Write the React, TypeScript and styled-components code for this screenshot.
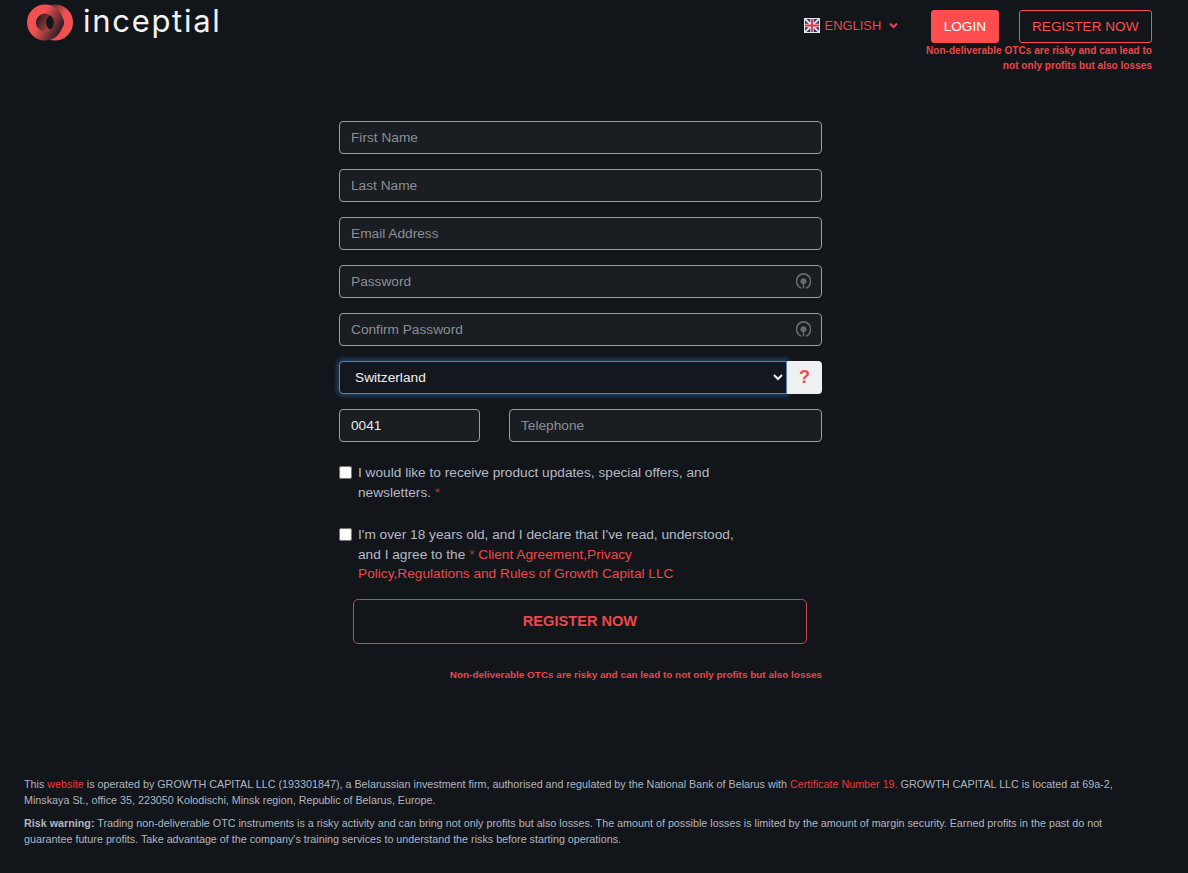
import styled, { createGlobalStyle } from 'styled-components';

const GlobalStyle = createGlobalStyle`
  html, body {
    margin: 0;
    background: #12151a;
  }
  * { box-sizing: border-box; }
  body {
    font-family: "Liberation Sans", Arial, sans-serif;
    color: #b4bac6;
  }
`;

const Page = styled.div`
  width: 1188px;
  height: 873px;
  overflow: hidden;
  display: flex;
  flex-direction: column;
`;

const Header = styled.header`
  display: flex;
  justify-content: space-between;
  align-items: flex-start;
  padding: 0 36px 0 27px;
  height: 120.6px;
`;

const Brand = styled.div`
  display: flex;
  align-items: center;
  gap: 10px;
  height: 44px;
`;

const Wordmark = styled.span`
  font-family: "Inter", sans-serif;
  font-weight: 400;
  font-size: 31px;
  letter-spacing: 1.7px;
  color: #f2f2f2;
  line-height: 40px;
  margin-top: -3px;
`;

const HeaderRight = styled.div`
  display: flex;
  flex-direction: column;
  align-items: flex-end;
  padding-top: 10px;
`;

const NavRow = styled.div`
  display: flex;
  align-items: center;
`;

const Lang = styled.div`
  display: flex;
  align-items: center;
  font-size: 12.9px;
  color: #e8484b;
  margin-right: 33px;
  margin-top: -3px;
`;

const LangLabel = styled.span`
  margin: 0 8px 0 5px;
`;

const NavButton = styled.button<{ $filled?: boolean }>`
  height: 33px;
  font-family: inherit;
  font-size: 13.6px;
  border-radius: 3px;
  border: 1px solid #ff4d4f;
  padding: 0 ${({ $filled }) => ($filled ? '11.5px' : '12.5px')};
  background: ${({ $filled }) => ($filled ? '#ff4d4f' : 'transparent')};
  color: ${({ $filled }) => ($filled ? '#ffffff' : '#ff4d4f')};
  margin-left: ${({ $filled }) => ($filled ? '0' : '20px')};
`;

const Warning = styled.div<{ $size: number }>`
  font-size: ${({ $size }) => $size}px;
  font-weight: 700;
  line-height: 15px;
  color: #e8474a;
  text-align: right;
`;

const Form = styled.form`
  width: 483px;
  margin-left: 339px;
  display: flex;
  flex-direction: column;
  gap: 15px;
`;

const Field = styled.div`
  position: relative;
  flex: 1;
`;

const Input = styled.input<{ $strong?: boolean }>`
  display: block;
  width: 100%;
  height: 33px;
  padding: 0 11px;
  background: #1a1d22;
  border: 1px solid #9a9da1;
  border-radius: 4px;
  font-family: inherit;
  font-size: 13.7px;
  font-weight: ${({ $strong }) => ($strong ? 500 : 400)};
  color: #e6e8ec;
  outline: none;

  &::placeholder {
    color: #8b8f95;
    opacity: 1;
  }
`;

const EyeIcon = styled.svg`
  position: absolute;
  right: 11px;
  top: 8px;
  width: 15px;
  height: 17px;
`;

const SelectRow = styled.div`
  display: flex;
  height: 33px;
`;

const Select = styled.select`
  flex: 1;
  height: 33px;
  padding: 0 11px;
  background: #14181e;
  border: 1px solid #5d86ae;
  border-radius: 4px 0 0 4px;
  box-shadow: 0 0 5px 2px rgba(60, 130, 200, 0.45);
  font-family: inherit;
  font-size: 13.7px;
  color: #f0f0f0;
  color-scheme: dark;
  outline: none;
`;

const HelpBox = styled.div`
  width: 35px;
  display: flex;
  align-items: center;
  justify-content: center;
  background: #eff0f2;
  border-radius: 0 4px 4px 0;
  color: #ee4b50;
  font-size: 18px;
  font-weight: 700;
`;

const PhoneRow = styled.div`
  display: flex;
  gap: 29px;
`;

const CodeField = styled.div`
  width: 141px;
`;

const Consents = styled.div`
  display: flex;
  flex-direction: column;
  gap: 23px;
  margin-top: 6.5px;
`;

const Consent = styled.label`
  display: flex;
  align-items: flex-start;
  font-size: 13.7px;
  line-height: 19.5px;
  color: #b4bac6;
  width: 400px;
`;

const Check = styled.input`
  width: 13px;
  height: 13px;
  margin: 3px 6px 0 0;
  flex: none;
  accent-color: #ffffff;
`;

const Red = styled.span`
  color: #ee474b;
`;

const Star = styled.span`
  color: #a83c42;
`;

const SubmitButton = styled.button`
  align-self: flex-start;
  margin: 0 0 0 14px;
  width: 454px;
  height: 45.5px;
  background: transparent;
  border: 1px solid #c9474b;
  border-radius: 5px;
  color: #ee474b;
  font-family: inherit;
  font-size: 14.6px;
  font-weight: 700;
`;

const FormWarning = styled(Warning)`
  margin-top: 8px;
`;

const Footer = styled.footer`
  margin-top: auto;
  padding: 0 50px 26px 24px;
  font-size: 10.75px;
  line-height: 15.5px;
  color: #b0b6c0;
`;

const FooterPara = styled.p`
  margin: 0 0 8px;

  &:last-child {
    margin-bottom: 0;
  }
`;

const FooterLink = styled.span`
  color: #e8383c;
`;

// two interlocked rings, each fading out where it passes under the other
const Logo = () => (
  <svg width="46" height="37" viewBox="0 0 46 37" fill="none">
    <defs>
      <linearGradient id="ringLeft" gradientUnits="userSpaceOnUse" x1="6" y1="12" x2="32" y2="26">
        <stop offset="0.3" stopColor="#ef5150" />
        <stop offset="1" stopColor="#3c2228" />
      </linearGradient>
      <linearGradient id="ringRight" gradientUnits="userSpaceOnUse" x1="40" y1="25" x2="14" y2="11">
        <stop offset="0.3" stopColor="#ef5150" />
        <stop offset="1" stopColor="#3c2228" />
      </linearGradient>
    </defs>
    <circle cx="28" cy="18.5" r="13.5" stroke="url(#ringRight)" strokeWidth="9" />
    <circle cx="18" cy="18.5" r="13.5" stroke="url(#ringLeft)" strokeWidth="9" />
  </svg>
);

const UkFlag = () => (
  <svg width="16" height="15" viewBox="0 0 16 15">
    <rect width="16" height="15" fill="#e8e8ee" />
    <rect x="1" y="1" width="14" height="13" fill="#26316f" />
    <path d="M1 1l14 13M15 1L1 14" stroke="#f0d8dc" strokeWidth="1.8" />
    <path d="M8 1v13M1 7.5h14" stroke="#f4eaec" strokeWidth="3.4" />
    <path d="M8 1v13M1 7.5h14" stroke="#d2384a" strokeWidth="1.8" />
  </svg>
);

const Chevron = () => (
  <svg width="9" height="7" viewBox="0 0 9 7" fill="none">
    <path d="M1 1.5l3.5 3.5L8 1.5" stroke="#e8484b" strokeWidth="2" />
  </svg>
);

const Eye = () => (
  <EyeIcon viewBox="0 0 15 17" fill="none">
    <path d="M5.2 15.2A7 7.4 0 1 1 10 15.2" stroke="#66696d" strokeWidth="1.7" />
    <circle cx="7.5" cy="8.3" r="3" fill="#66696d" />
    <path d="M7.5 10v5.5" stroke="#66696d" strokeWidth="1.5" />
  </EyeIcon>
);

export default function App() {
  return (
    <Page>
      <GlobalStyle />
      <Header>
        <Brand>
          <Logo />
          <Wordmark>inceptial</Wordmark>
        </Brand>
        <HeaderRight>
          <NavRow>
            <Lang>
              <UkFlag />
              <LangLabel>ENGLISH</LangLabel>
              <Chevron />
            </Lang>
            <NavButton type="button" $filled>LOGIN</NavButton>
            <NavButton type="button">REGISTER NOW</NavButton>
          </NavRow>
          <Warning $size={10.1}>
            Non-deliverable OTCs are risky and can lead to
            <br />
            not only profits but also losses
          </Warning>
        </HeaderRight>
      </Header>
      <Form>
        <Input placeholder="First Name" />
        <Input placeholder="Last Name" />
        <Input placeholder="Email Address" />
        <Field>
          <Input type="password" placeholder="Password" />
          <Eye />
        </Field>
        <Field>
          <Input type="password" placeholder="Confirm Password" />
          <Eye />
        </Field>
        <SelectRow>
          <Select defaultValue="Switzerland">
            <option>Switzerland</option>
          </Select>
          <HelpBox>?</HelpBox>
        </SelectRow>
        <PhoneRow>
          <CodeField>
            <Input defaultValue="0041" $strong />
          </CodeField>
          <Field>
            <Input placeholder="Telephone" />
          </Field>
        </PhoneRow>
        <Consents>
          <Consent>
            <Check type="checkbox" />
            <span>
              I would like to receive product updates, special offers, and newsletters. <Star>*</Star>
            </span>
          </Consent>
          <Consent>
            <Check type="checkbox" />
            <span>
              I'm over 18 years old, and I declare that I've read, understood, and I agree to the{' '}
              <Star>*</Star> <Red>Client Agreement,Privacy Policy,Regulations and Rules of Growth Capital LLC</Red>
            </span>
          </Consent>
        </Consents>
        <SubmitButton type="button">REGISTER NOW</SubmitButton>
        <FormWarning $size={9.95}>Non-deliverable OTCs are risky and can lead to not only profits but also losses</FormWarning>
      </Form>
      <Footer>
        <FooterPara>
          This <FooterLink>website</FooterLink> is operated by GROWTH CAPITAL LLC (193301847), a Belarussian investment
          firm, authorised and regulated by the National Bank of Belarus with{' '}
          <FooterLink>Certificate Number 19.</FooterLink> GROWTH CAPITAL LLC is located at 69a-2, Minskaya St., office
          35, 223050 Kolodischi, Minsk region, Republic of Belarus, Europe.
        </FooterPara>
        <FooterPara>
          <b>Risk warning:</b> Trading non-deliverable OTC instruments is a risky activity and can bring not only
          profits but also losses. The amount of possible losses is limited by the amount of margin security. Earned
          profits in the past do not guarantee future profits. Take advantage of the company's training services to
          understand the risks before starting operations.
        </FooterPara>
      </Footer>
    </Page>
  );
}
